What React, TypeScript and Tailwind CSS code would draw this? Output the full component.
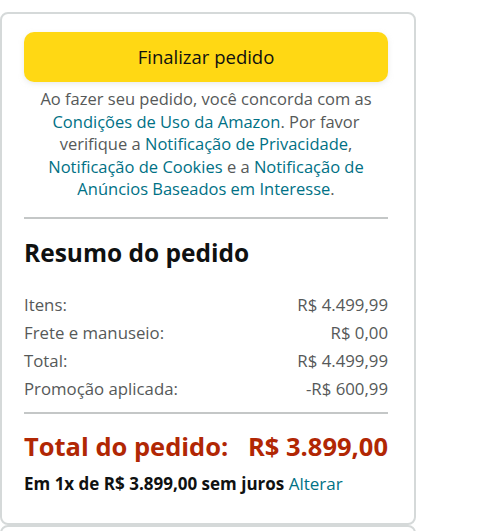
import React from 'react';

const rows = [
  { label: 'Itens:', value: 'R$ 4.499,99' },
  { label: 'Frete e manuseio:', value: 'R$ 0,00' },
  { label: 'Total:', value: 'R$ 4.499,99' },
  { label: 'Promoção aplicada:', value: '-R$ 600,99' },
];

function Link({ children }: { children: React.ReactNode }) {
  return <span className="text-[#007185]">{children}</span>;
}

export default function App() {
  return (
    <div className="w-[500px] h-[531px] overflow-hidden bg-white pt-[12px] font-['Open_Sans',sans-serif] text-[#0F1111]">
      <div className="w-[416px] h-[513px] border-2 border-[#d5d9d9] rounded-[8px] pl-[22px] pr-[26px] pt-[18px]">
        <button className="w-full h-[50px] rounded-[10px] bg-[#FFD814] shadow-[0_2px_5px_rgba(213,217,217,0.5)] text-[18.5px] text-[#0F1111]">
          Finalizar pedido
        </button>
        <p className="mt-[6px] text-center text-[16.5px] leading-[22.5px] text-[#565959] whitespace-nowrap">
          Ao fazer seu pedido, você concorda com as
          <br />
          <Link>Condições de Uso da Amazon</Link>. Por favor
          <br />
          verifique a <Link>Notificação de Privacidade</Link>,
          <br />
          <Link>Notificação de Cookies</Link> e a <Link>Notificação de</Link>
          <br />
          <Link>Anúncios Baseados em Interesse</Link>.
        </p>
        <div className="mt-[16px] h-[2px] bg-[#c4c7c7]" />
        <h2 className="mt-[19px] text-[24.5px] leading-[30px] font-bold">Resumo do pedido</h2>
        <div className="mt-[23px] flex flex-col">
          {rows.map((r) => (
            <div key={r.label} className="flex justify-between h-[28px] items-center text-[16.8px] text-[#565959]">
              <span>{r.label}</span>
              <span>{r.value}</span>
            </div>
          ))}
        </div>
        <div className="mt-[9px] h-[2px] bg-[#c4c7c7]" />
        <div className="mt-[13px] flex justify-between items-center text-[25.5px] leading-[38px] font-bold text-[#B12704]">
          <span>Total do pedido:</span>
          <span>R$ 3.899,00</span>
        </div>
        <p className="mt-[9px] text-[17px] leading-[20px] whitespace-nowrap">
          <span className="font-bold">Em 1x de R$ 3.899,00 sem juros</span> <Link>Alterar</Link>
        </p>
      </div>
      <div className="w-[416px] h-[20px] border-2 border-[#d5d9d9] rounded-t-[8px]" />
    </div>
  );
}
